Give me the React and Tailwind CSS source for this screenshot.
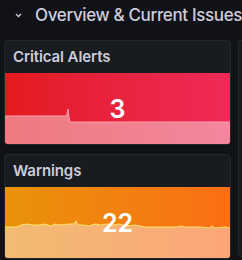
import React from 'react'

function Spark({ points, line, fillFrom, fillTo, id }) {
  const d = 'M' + points.map(p => p.join(',')).join(' L')
  return (
    <svg className="absolute inset-0 w-full h-full" viewBox="0 0 225 71" preserveAspectRatio="none">
      <defs>
        <linearGradient id={id} x1="0" y1="0" x2="1" y2="0">
          <stop offset="0" stopColor={fillFrom} />
          <stop offset="1" stopColor={fillTo} />
        </linearGradient>
      </defs>
      <path d={`${d} L225,71 L0,71 Z`} fill={`url(#${id})`} />
      <path d={d} fill="none" stroke={line} strokeWidth="1" />
    </svg>
  )
}

function StatCard({ title, value, bg, spark }) {
  return (
    <div className="w-[227px] h-[105px] rounded-[4px] border border-[#23262c] bg-[#181b1f] flex flex-col overflow-hidden">
      <div className="h-[32px] flex items-center px-2 text-[15px] font-semibold text-[#ccccdc] tracking-[-0.1px]">{title}</div>
      <div className={`relative flex-1 ${bg}`}>
        {spark}
        <div className="absolute inset-0 flex items-center justify-center pt-[3px] text-[25px] font-semibold text-white">{value}</div>
      </div>
    </div>
  )
}

const critPts = [[0, 43], [60, 43], [62, 42], [63, 36], [64, 44], [65, 49], [225, 49]]
const warnPts = [
  [0, 40], [12, 40], [16, 38], [22, 37], [28, 38], [34, 38], [40, 37], [46, 39], [50, 37], [56, 38],
  [64, 37], [69, 37], [71, 34], [73, 38], [78, 38], [84, 39], [90, 37], [96, 38], [102, 37], [108, 38],
  [114, 37], [122, 39], [130, 38], [140, 40], [160, 40], [172, 40], [176, 39], [180, 40], [196, 40],
  [204, 41], [207, 39], [210, 41], [220, 40], [225, 41],
]

export default function App() {
  return (
    <div className="w-[242px] h-[260px] overflow-hidden bg-[#111217] font-['Inter',sans-serif]">
      <div className="h-[40px] flex items-center pl-[15px] pb-[9px] text-[#ccccdc]">
        <svg width="7" height="5" viewBox="0 0 7 5" className="shrink-0 mr-[13px]">
          <path d="M1 1 L3.5 3.5 L6 1" fill="none" stroke="#ccccdc" strokeWidth="1.3" />
        </svg>
        <span className="text-[17px] font-medium whitespace-nowrap tracking-[-0.35px]">Overview &amp; Current Issues</span>
      </div>
      <div className="flex gap-[7px] pl-[4px]">
        <div className="flex flex-col gap-[9px]">
          <StatCard
            title="Critical Alerts"
            value="3"
            bg="bg-gradient-to-r from-[#e31a1c] to-[#ee2a58]"
            spark={<Spark id="g1" points={critPts} line="#f7a3ae" fillFrom="#ee7a80" fillTo="#f4879e" />}
          />
          <StatCard
            title="Warnings"
            value="22"
            bg="bg-gradient-to-r from-[#e8920a] to-[#fb6e14]"
            spark={<Spark id="g2" points={warnPts} line="#fde36a" fillFrom="#f2bb72" fillTo="#fca679" />}
          />
        </div>
        <div className="w-[10px] h-[217px] rounded-l-[4px] border border-r-0 border-[#23262c] bg-[#181b1f]" />
      </div>
    </div>
  )
}
